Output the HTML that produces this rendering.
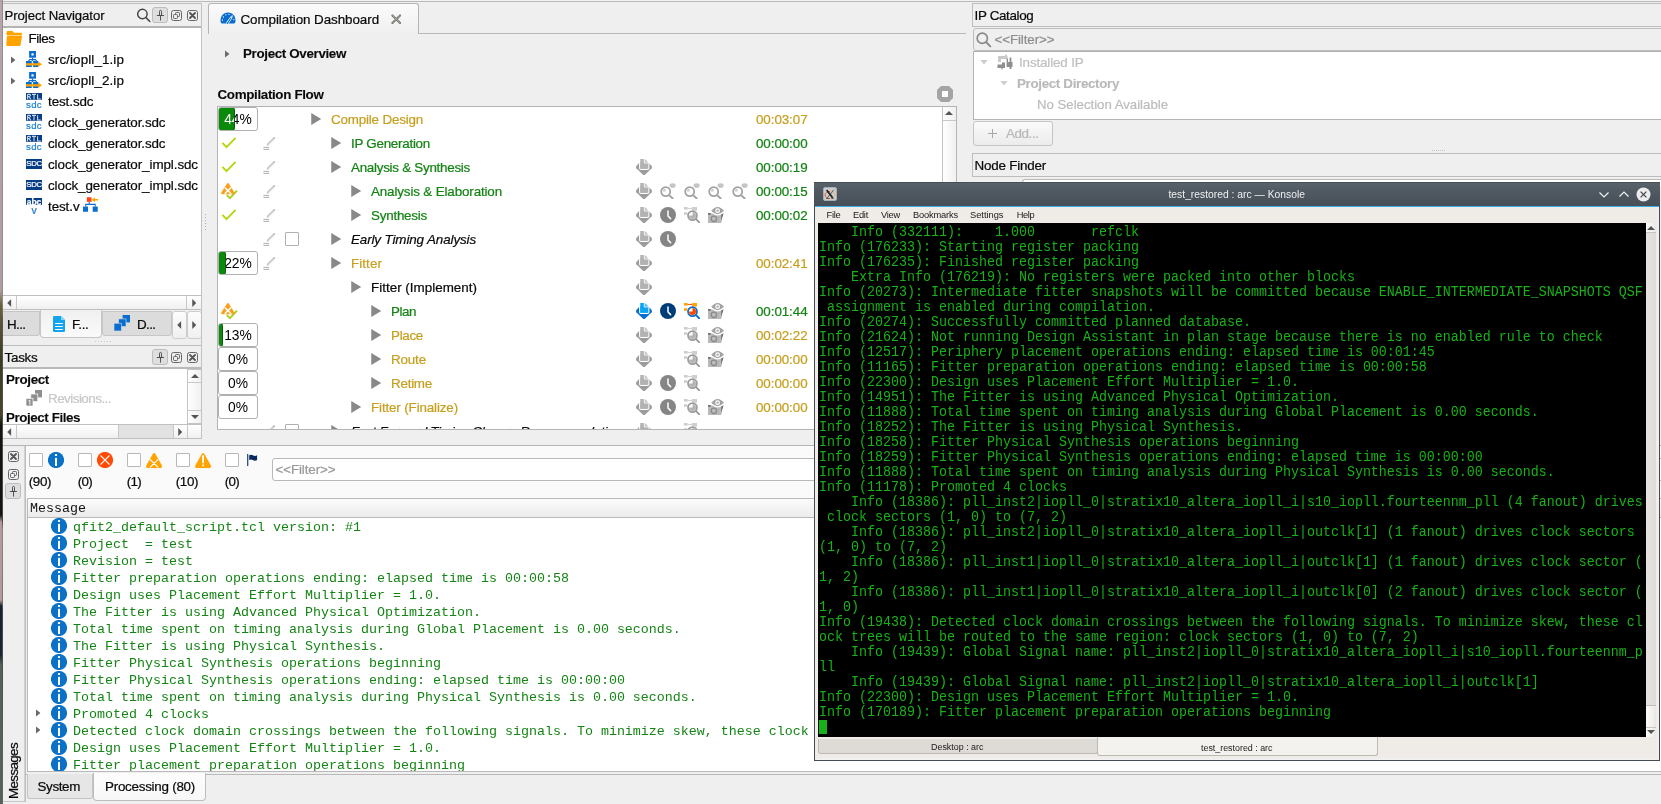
<!DOCTYPE html><html><head><meta charset="utf-8"><title>Quartus</title><style>
html,body{margin:0;padding:0;background:#efefef;}
body{width:1661px;height:804px;overflow:hidden;font-family:"Liberation Sans",sans-serif;font-size:13px;color:#0a0a0a;}
#root{position:relative;width:1661px;height:804px;overflow:hidden;background:#efefef;will-change:transform;}
.a{position:absolute;box-sizing:border-box;}
.t{position:absolute;white-space:pre;line-height:16px;height:16px;font-size:13px;-webkit-text-stroke:0.22px currentColor;}
.ic{position:absolute;overflow:visible;}
.b{font-weight:bold;}
.i{font-style:italic;}
.g{color:#148414;}
.y{color:#c79f1e;}
.gr{color:#b4b4b4;}
.mono{font-family:"Liberation Mono",monospace;font-size:13.33px;}
.hdr{position:absolute;box-sizing:border-box;border:1px solid #bdbdbd;background:#efefef;}
.wbox{position:absolute;box-sizing:border-box;border:1px solid #b4b4b4;background:#fff;}
.pbox{position:absolute;box-sizing:border-box;border:1px solid #b0b0b0;border-radius:3px;background:#fff;width:40px;height:24px;overflow:hidden;}
.pfill{position:absolute;left:-1px;top:-1px;bottom:-1px;background:#0a8a0a;border:1px solid #086008;border-radius:3px;box-sizing:border-box;}
.ptxt{position:absolute;left:0;top:0;width:38px;height:22px;line-height:24px;text-align:center;font-size:13.8px;color:#000;white-space:pre;}
.ptxtw{color:#fff;overflow:hidden;text-align:left;}
.cb{position:absolute;box-sizing:border-box;width:14px;height:14px;border:1px solid #b8b8b8;background:#fff;border-radius:1px;}
.sbtn{position:absolute;box-sizing:border-box;background:linear-gradient(#fdfdfd,#ececec);border:1px solid #c4c4c4;}
.term{position:absolute;left:818px;top:223px;width:828px;height:514px;background:#000;overflow:hidden;}
.tl{position:absolute;left:1px;white-space:pre;font-family:"Liberation Mono",monospace;font-size:13.33px;line-height:15px;height:15px;color:#18b218;transform:scaleY(1.1);transform-origin:0 11px;}
.ml{position:absolute;left:73px;white-space:pre;font-family:"Liberation Mono",monospace;font-size:13.33px;line-height:17px;height:17px;color:#148414;}
.km{position:absolute;top:207px;height:16px;line-height:16px;font-size:11px;color:#1a1a1a;white-space:pre;}

</style></head><body>
<svg width="0" height="0" style="position:absolute">
<defs>
<symbol id="tri" viewBox="0 0 10 12"><path d="M0 0 L10 6 L0 12 Z" fill="#898989"/></symbol>
<symbol id="tris" viewBox="0 0 5 8"><path d="M0 0 L5 4 L0 8 Z" fill="#6a6a6a"/></symbol>
<symbol id="check" viewBox="0 0 14 12"><path d="M0.3 5.8 L4.5 10.1 L13.6 0.8" fill="none" stroke="#b4d60a" stroke-width="1.9" stroke-linejoin="miter"/></symbol>
<symbol id="pencil" viewBox="0 0 13 13"><path d="M4.4 7.8 L11 1.2" stroke="#cdcdcd" stroke-width="2" fill="none"/><path d="M3.6 8.6 L4.8 7.2 L4.9 8.5Z" fill="#9a9a9a"/><rect x="10.5" y="0.2" width="1.5" height="1.5" fill="#b0b0b0"/><path d="M0.4 10.4 H6.3 M0.4 12.4 H6.3" stroke="#8c8c8c" stroke-width="0.7" fill="none"/></symbol>
<symbol id="report" viewBox="0 0 16 16"><path d="M0.3 6.9 L3.6 3.6 H12.4 L15.7 6.9 Q16.2 8.2 15.7 9.3 L9 15.7 Q8 16.3 7 15.7 L0.3 9.3 Q-0.2 8.2 0.3 6.9Z" fill="#9c9c9c"/><path d="M3.7 3 V9.2 Q3.7 10.3 4.8 10.3 H11.7 Q12.8 10.3 12.8 9.2 V3" fill="#b2b2b2" stroke="#fff" stroke-width="1.2"/><path d="M4.3 0 H8.3 L12.2 3.9 V9.7 H4.3 Z" fill="#b2b2b2"/><path d="M8.3 0 V3.9 H12.2" fill="none" stroke="#fff" stroke-width="1"/><path d="M8.9 0.1 L12.1 3.3 H8.9Z" fill="#c4c4c4"/></symbol>
<symbol id="reportb" viewBox="0 0 16 16"><path d="M0.3 6.9 L3.6 3.6 H12.4 L15.7 6.9 Q16.2 8.2 15.7 9.3 L9 15.7 Q8 16.3 7 15.7 L0.3 9.3 Q-0.2 8.2 0.3 6.9Z" fill="#0a6ed1"/><path d="M3.7 3 V9.2 Q3.7 10.3 4.8 10.3 H11.7 Q12.8 10.3 12.8 9.2 V3" fill="#0aa5ee" stroke="#fff" stroke-width="1.2"/><path d="M4.3 0 H8.3 L12.2 3.9 V9.7 H4.3 Z" fill="#0aa5ee"/><path d="M8.3 0 V3.9 H12.2" fill="none" stroke="#fff" stroke-width="1"/><path d="M8.9 0.1 L12.1 3.3 H8.9Z" fill="#3fbcf4"/></symbol>
<symbol id="clock" viewBox="0 0 16 16"><circle cx="8" cy="8" r="8" fill="#858585"/><path d="M8 3.9 V9 L10.6 11.6" stroke="#fff" stroke-width="1.5" fill="none" stroke-linecap="round" stroke-linejoin="round"/></symbol>
<symbol id="clockb" viewBox="0 0 16 16"><circle cx="8" cy="8" r="8" fill="#003c78"/><path d="M8 3.9 V9 L10.6 11.6" stroke="#fff" stroke-width="1.5" fill="none" stroke-linecap="round" stroke-linejoin="round"/></symbol>
<symbol id="mag" viewBox="0 0 16 16"><ellipse cx="12.6" cy="2.6" rx="3.1" ry="2.3" fill="#c6c6c6"/><circle cx="5.7" cy="8.6" r="4.5" fill="#fff" stroke="#a2a2a2" stroke-width="1.7"/><path d="M5.7 8.6 V5.7 A2.9 2.9 0 0 0 2.8 8.6 Z" fill="#cdcdcd"/><path d="M9.2 12.1 L12.6 15.5" stroke="#a2a2a2" stroke-width="1.9" stroke-linecap="round"/></symbol>
<symbol id="magt" viewBox="0 0 16 16"><rect x="0" y="0" width="3.6" height="2.6" fill="#cdcdcd"/><rect x="8.2" y="0" width="4.8" height="3.6" fill="#cdcdcd"/><rect x="0" y="5.2" width="3.2" height="2.6" fill="#cdcdcd"/><path d="M3.6 1.4 H8.2" stroke="#cdcdcd" stroke-width="1"/><circle cx="8.5" cy="8.6" r="4.5" fill="#fff" stroke="#9c9c9c" stroke-width="1.7"/><path d="M8.5 8.6 V5.1 A3.5 3.5 0 1 1 5 8.6 Z" fill="#b4b4b4"/><path d="M12 12.1 L15.3 15.4" stroke="#9c9c9c" stroke-width="1.9" stroke-linecap="round"/></symbol>
<symbol id="magtb" viewBox="0 0 16 16"><rect x="0" y="0" width="3.6" height="2.6" fill="#ffa400"/><rect x="8.2" y="0" width="4.8" height="3.6" fill="#ffa400"/><rect x="0" y="5.2" width="3.2" height="2.6" fill="#ffa400"/><path d="M3.6 1.4 H8.2" stroke="#ff4713" stroke-width="1"/><circle cx="8.5" cy="8.6" r="4.5" fill="#fff" stroke="#0a6ed1" stroke-width="1.7"/><path d="M8.5 8.6 V5.1 A3.5 3.5 0 1 1 5 8.6 Z" fill="#ff4500"/><path d="M12 12.1 L15.3 15.4" stroke="#0a6ed1" stroke-width="1.9" stroke-linecap="round"/></symbol>
<symbol id="cam" viewBox="0 0 16 16"><path d="M0 6.4 H13.4 V16 H0 Z" fill="#b9b9b9"/><path d="M13.2 7.2 L15.6 6.2 L13.2 14.6Z" fill="#6e6e6e"/><rect x="0" y="6" width="2.6" height="1.7" fill="#6a6a6a"/><circle cx="5.9" cy="11.8" r="2.7" fill="#bdbdbd" stroke="#8a8a8a" stroke-width="1.3"/><path d="M2.8 4.6 Q9.6 12.6 16.4 4.6 L15.6 3.6 H3.6Z" fill="#fff"/><path d="M3.2 3.8 Q9.6 -3.8 16 3.8 Q9.6 10.6 3.2 3.8Z" fill="#a2a2a2"/><circle cx="9.6" cy="3.7" r="2.4" fill="#fff"/><circle cx="9.6" cy="3.7" r="1.15" fill="#a2a2a2"/></symbol>
<symbol id="cwchk" viewBox="0 0 17 17"><path d="M5.8 12.1 L8.9 15.1 L16 7.7" fill="none" stroke="#a6cf1a" stroke-width="1.8"/><path d="M5.7 0.9 Q6.9 -0.7 8.1 0.9 L13.4 9.3 Q14.2 11.3 12.1 11.3 H1.7 Q-0.4 11.3 0.4 9.3 Z" fill="#f9a11c"/><path d="M3.7 4.5 L10.1 10.7 M10.1 4.5 L3.7 10.7" stroke="#fff" stroke-width="1.6" fill="none"/></symbol>
<symbol id="stop" viewBox="0 0 16 16"><path d="M4 0 H12 L16 4 V12 L12 16 H4 L0 12 V4 Z" fill="#a4a4a4"/><rect x="5" y="5" width="6" height="6" fill="#fff"/></symbol>
<symbol id="search" viewBox="0 0 14 15"><circle cx="5.6" cy="6.2" r="4.9" fill="none" stroke="#444" stroke-width="1.5"/><path d="M9.2 9.8 L13.6 14.2" stroke="#444" stroke-width="1.7" stroke-linecap="round"/></symbol>
<symbol id="searchg" viewBox="0 0 16 16"><circle cx="6.5" cy="6.5" r="5.3" fill="none" stroke="#8a8a8a" stroke-width="1.7"/><path d="M10.6 10.6 L15 15" stroke="#8a8a8a" stroke-width="1.9" stroke-linecap="round"/></symbol>
<symbol id="pin" viewBox="0 0 8 12"><path d="M4.5 6.5 V11.2 M1.2 6.5 H7.8 M3.5 6.5 V2.4 Q3.5 1.4 4.5 1.4 Q5.5 1.4 5.5 2.4 V6.5" stroke="#444" stroke-width="0.9" fill="none" stroke-linecap="round"/></symbol>
<symbol id="float" viewBox="0 0 11 11"><rect x="0.5" y="0.5" width="10" height="10" rx="2" fill="none" stroke="#666" stroke-width="1"/><rect x="4.5" y="2.5" width="4" height="4" rx="0.8" fill="#efefef" stroke="#666" stroke-width="1"/><rect x="2.5" y="4.5" width="4" height="4" rx="0.8" fill="#efefef" stroke="#666" stroke-width="1"/></symbol>
<symbol id="closeb" viewBox="0 0 11 11"><rect x="0.5" y="0.5" width="10" height="10" rx="2" fill="none" stroke="#666" stroke-width="1"/><path d="M3 3 L8 8 M8 3 L3 8" stroke="#555" stroke-width="1.9" stroke-linecap="round"/></symbol>
<symbol id="tabx" viewBox="0 0 11 11"><path d="M1.5 1.5 L9.5 9.5 M9.5 1.5 L1.5 9.5" stroke="#6f6f68" stroke-width="2.2" stroke-linecap="round"/><path d="M1.5 1.5 L9.5 9.5 M9.5 1.5 L1.5 9.5" stroke="#b5b5ad" stroke-width="0.8" stroke-linecap="round"/></symbol>
<symbol id="folder" viewBox="0 0 16 15"><path d="M0.5 1.2 Q0.5 0 1.7 0 H6.5 L8 1.8 H15 Q16 1.8 15.9 2.8 V4 H0.5 Z" fill="#ffa300"/><path d="M1.6 4.6 H15.4 Q16.2 4.6 16 5.5 L14.6 14 Q14.4 15 13.4 15 H1.2 Q0.2 15 0.3 14 L0.9 5.4 Q1 4.6 1.6 4.6Z" fill="#ffa300"/></symbol>
<symbol id="ipfile" viewBox="0 0 16 16"><rect x="3.1" y="0" width="6.9" height="6.7" fill="#0a6ed1"/><rect x="5.4" y="2.3" width="2.3" height="2.3" rx="0.6" fill="#fff"/><path d="M6.55 6.7 V10 M2.9 10.2 V9.4 L3.6 8.7 H9.5 L10.2 9.4 V10.2" stroke="#0a6ed1" stroke-width="1.2" fill="none"/><rect x="0" y="10" width="5.8" height="6" fill="#0a6ed1"/><rect x="7.1" y="10" width="5.2" height="6" fill="#0a6ed1"/><path d="M0 12.2 H12.3 V10.4 L16 13.3 L12.3 16 V14.6 H0 Z" fill="#ffa400"/></symbol>
<symbol id="rtlsdc" viewBox="0 0 16 16"><rect x="0" y="0" width="16" height="6.8" fill="#063d85"/><path d="M1.5 1.2 V6.2 M1.5 1.4 H3.6 Q4.6 1.6 4.4 2.6 Q4.2 3.6 1.5 3.6 M3 3.6 L4.8 6.2 M6 1.4 H10 M8 1.4 V6.2 M11.6 1.2 V6 H14.8" stroke="#fff" stroke-opacity="0.8" stroke-width="1.1" fill="none"/></symbol>
<symbol id="sdcf" viewBox="0 0 16 10"><rect x="0" y="0" width="16" height="10" fill="#063d85"/></symbol>
<symbol id="abcv" viewBox="0 0 16 16"><rect x="0" y="0" width="16" height="6.8" fill="#063d85"/></symbol>
<symbol id="hier" viewBox="0 0 16 15"><rect x="4" y="0" width="4.8" height="4.8" fill="#ff4713"/><path d="M9.6 2.6 H15.8" stroke="#ffa400" stroke-width="1.3" fill="none"/><path d="M9.2 2.6 L12.4 0 V5.2Z" fill="#ffa400"/><path d="M6.4 4.8 V7.4 M2.8 9.6 V7.4 H12.6 V9.6" stroke="#0a6ed1" stroke-width="1.1" fill="none"/><rect x="0" y="9.6" width="5.2" height="5.4" fill="#0a6ed1"/><rect x="10" y="9.6" width="5.2" height="5.4" fill="#0a6ed1"/></symbol>
<symbol id="gauge" viewBox="0 0 16 12"><path d="M0.5 8.4 C0.5 3.6 4 0.4 8 0.4 C12 0.4 15.5 3.6 15.5 8.4 C15.5 10.6 14.6 11.5 13.2 11.5 H2.8 C1.4 11.5 0.5 10.6 0.5 8.4Z" fill="#0a6ed1"/><path d="M7.3 11.3 L11.2 5.6" stroke="#fff" stroke-width="2.4" stroke-linecap="round"/><path d="M7.2 11.6 L10.9 6" stroke="#0a6ed1" stroke-width="1.1" stroke-linecap="round"/><g fill="#fff"><circle cx="2.4" cy="8" r="0.65"/><circle cx="3.4" cy="5" r="0.65"/><circle cx="5.8" cy="2.8" r="0.65"/><circle cx="9" cy="2.3" r="0.65"/><circle cx="12.2" cy="4" r="0.65"/><circle cx="13.8" cy="7.6" r="0.65"/></g></symbol>
<symbol id="docb" viewBox="0 0 12 16"><path d="M1.2 0 H8 L12 4 V14.8 Q12 16 10.8 16 H1.2 Q0 16 0 14.8 V1.2 Q0 0 1.2 0Z" fill="#12a5ee"/><path d="M8 0 V4 H12" fill="#8ed6f8"/><path d="M2.2 7.5 H9.8 M2.2 10.5 H9.8 M2.2 13.5 H9.8" stroke="#fff" stroke-width="1"/></symbol>
<symbol id="units" viewBox="0 0 16 16"><rect x="8.6" y="0" width="7.4" height="7.4" fill="#0a6ed1"/><rect x="4.6" y="3.9" width="7.4" height="7.6" fill="#0a6ed1" stroke="#dcdcdc" stroke-width="0.6"/><rect x="0" y="8.2" width="7.4" height="7.8" fill="#0a6ed1" stroke="#dcdcdc" stroke-width="0.6"/></symbol>
<symbol id="unitsg" viewBox="0 0 16 16"><rect x="9" y="0" width="7" height="7.4" fill="#8e8e8e"/><rect x="4.8" y="4" width="7" height="7.6" fill="#8e8e8e" stroke="#fff" stroke-width="0.7"/><rect x="0" y="8.3" width="7" height="7.7" fill="#8e8e8e" stroke="#fff" stroke-width="0.7"/><path d="M2.4 11 L3.9 10 V14.8" stroke="#fff" stroke-width="0.9" fill="none"/></symbol>
<symbol id="ipcat" viewBox="0 0 16 16"><path d="M1 2 H8 V0.8 H10 V2 H10.5 V5 H4 V8 H1 Z" fill="#c9c9c9"/><path d="M0.5 10.5 H5 V8.5 H8 V14 H5.6 V15.4 H4.4 V14 H0.5 Z" fill="#8e8e8e"/><path d="M9.6 4.5 H11 V8 H12.6 V3.4 H14.4 V8 H15.5 V13 H14.4 V15 H12.6 V13 H9.6 Z" fill="#8e8e8e"/></symbol>
<symbol id="dtri" viewBox="0 0 8 5"><path d="M0 0 H8 L4 5 Z" fill="#cdcdcd"/></symbol>
<symbol id="info" viewBox="0 0 16 16"><circle cx="8" cy="8" r="8.1" fill="#0a71c6"/><rect x="6.9" y="2" width="2.2" height="2.1" rx="0.7" fill="#fff"/><rect x="7" y="5.7" width="2" height="8.3" rx="0.6" fill="#fff"/></symbol>
<symbol id="err" viewBox="0 0 16 16"><circle cx="8" cy="8" r="8.1" fill="#ff4a04"/><path d="M3.9 3.9 L12.1 12.1 M12.1 3.9 L3.9 12.1" stroke="#fff" stroke-width="1.3" stroke-linecap="round"/></symbol>
<symbol id="cwarn" viewBox="0 0 16 15"><path d="M6.7 0.9 Q8 -0.8 9.3 0.9 L15.6 12 Q16.5 15 13.8 15 H2.2 Q-0.5 15 0.4 12 Z" fill="#ffa300"/><path d="M4.2 6.6 L11.8 13.9 M11.8 6.6 L4.2 13.9" stroke="#fff" stroke-width="1.2" stroke-linecap="round"/></symbol>
<symbol id="warn" viewBox="0 0 16 15"><path d="M6.7 0.9 Q8 -0.8 9.3 0.9 L15.6 12 Q16.5 15 13.8 15 H2.2 Q-0.5 15 0.4 12 Z" fill="#ffa300"/><rect x="7.1" y="2.2" width="1.8" height="8" rx="0.4" fill="#fff"/><rect x="7.1" y="11.4" width="1.8" height="1.8" rx="0.3" fill="#fff"/></symbol>
<symbol id="flag" viewBox="0 0 12 13"><path d="M0.8 0 V13" stroke="#062f6e" stroke-width="1.2"/><path d="M2.4 1.2 Q4.6 0 6.4 1.4 Q8.6 2.6 11 1.4 V6.6 Q8.6 7.8 6.4 6.6 Q4.6 5.4 2.4 6.4 Z" fill="#08285e"/></symbol>
<symbol id="sbup" viewBox="0 0 8 4"><path d="M0 4 L4 0 L8 4Z" fill="#555"/></symbol>
<symbol id="sbdn" viewBox="0 0 8 4"><path d="M0 0 L4 4 L8 0Z" fill="#555"/></symbol>
<symbol id="sblf" viewBox="0 0 4 8"><path d="M4 0 L0 4 L4 8Z" fill="#555"/></symbol>
<symbol id="sbrt" viewBox="0 0 4 8"><path d="M0 0 L4 4 L0 8Z" fill="#555"/></symbol>
</defs></svg>

<div id="root">
<div class="a" style="left:0;top:0;width:1661px;height:1px;background:#f2f2f2"></div><div class="a" style="left:0;top:1px;width:1661px;height:1px;background:#b9b9b9"></div>
<div class="a" style="left:0;top:0;width:2px;height:804px;background:linear-gradient(#b9a4a8 0,#b39c9f 290px,#6a6238 305px,#3c3b22 360px,#4a4526 415px,#14140f 425px,#15150f 515px,#b6999b 522px,#b6999b 600px,#1a2030 606px,#1c2434 655px,#566258 665px,#566258 804px)"></div>
<div class="a" style="left:2px;top:0;width:1px;height:804px;background:linear-gradient(#8e8e8e 0,#8e8e8e 300px,#555 320px,#444 520px,#888 530px,#777 600px,#444 610px,#666 804px)"></div>
<div class="hdr" style="left:3px;top:3px;width:199px;height:25px;border-left:none;border-bottom:2px solid #b4b4b4"></div>
<div class="t " style="left:4.5px;top:8px;font-size:13.2px;letter-spacing:-0.068px;;">Project Navigator</div>
<svg class="ic" style="left:137px;top:7.5px;width:13.5px;height:14.5px" ><use href="#search"/></svg>
<div class="a" style="left:152px;top:7px;width:16px;height:16px;border:1px solid #bdbdbd;border-radius:3px;background:#dedede"></div>
<svg class="ic" style="left:156px;top:9px;width:8px;height:12px" ><use href="#pin"/></svg>
<svg class="ic" style="left:171px;top:9.5px;width:11px;height:11px" ><use href="#float"/></svg>
<svg class="ic" style="left:187px;top:9.5px;width:11px;height:11px" ><use href="#closeb"/></svg>
<div class="a" style="left:3px;top:28px;width:199px;height:268px;background:#fff;border-right:1px solid #bdbdbd"></div>
<svg class="ic" style="left:6px;top:31px;width:16px;height:15px" ><use href="#folder"/></svg>
<div class="t " style="left:28.5px;top:30.5px;font-size:13.4px;letter-spacing:-0.456px;;">Files</div>
<svg class="ic" style="left:11px;top:55.5px;width:4.5px;height:8px" ><use href="#tris"/></svg>
<svg class="ic" style="left:26px;top:51.0px;width:16px;height:16px" ><use href="#ipfile"/></svg>
<div class="t " style="left:48px;top:52.0px;font-size:13.4px;letter-spacing:0.112px;;">src/iopll_1.ip</div>
<svg class="ic" style="left:11px;top:76.5px;width:4.5px;height:8px" ><use href="#tris"/></svg>
<svg class="ic" style="left:26px;top:72.0px;width:16px;height:16px" ><use href="#ipfile"/></svg>
<div class="t " style="left:48px;top:73.0px;font-size:13.4px;letter-spacing:0.112px;;">src/iopll_2.ip</div>
<svg class="ic" style="left:26px;top:93.0px;width:16px;height:16px" ><use href="#rtlsdc"/></svg>
<div class="t" style="left:25px;top:100.0px;width:18px;height:10px;line-height:10px;font-size:9.6px;color:#1f83d1;text-align:center;letter-spacing:0.3px">sdc</div>
<div class="t " style="left:48px;top:94.0px;font-size:13.4px;letter-spacing:-0.082px;;">test.sdc</div>
<svg class="ic" style="left:26px;top:114.0px;width:16px;height:16px" ><use href="#rtlsdc"/></svg>
<div class="t" style="left:25px;top:121.0px;width:18px;height:10px;line-height:10px;font-size:9.6px;color:#1f83d1;text-align:center;letter-spacing:0.3px">sdc</div>
<div class="t " style="left:48px;top:115.0px;font-size:13.4px;letter-spacing:-0.085px;;">clock_generator.sdc</div>
<svg class="ic" style="left:26px;top:135.0px;width:16px;height:16px" ><use href="#rtlsdc"/></svg>
<div class="t" style="left:25px;top:142.0px;width:18px;height:10px;line-height:10px;font-size:9.6px;color:#1f83d1;text-align:center;letter-spacing:0.3px">sdc</div>
<div class="t " style="left:48px;top:136.0px;font-size:13.4px;letter-spacing:-0.085px;;">clock_generator.sdc</div>
<svg class="ic" style="left:26px;top:159.0px;width:16px;height:10px" ><use href="#sdcf"/></svg>
<div class="t" style="left:26px;top:159.0px;width:16px;height:10px;line-height:10.5px;font-size:7.8px;color:#fff;text-align:center;letter-spacing:-0.35px">SDC</div>
<div class="t " style="left:48px;top:157.0px;font-size:13.4px;letter-spacing:-0.077px;;">clock_generator_impl.sdc</div>
<svg class="ic" style="left:26px;top:180.0px;width:16px;height:10px" ><use href="#sdcf"/></svg>
<div class="t" style="left:26px;top:180.0px;width:16px;height:10px;line-height:10.5px;font-size:7.8px;color:#fff;text-align:center;letter-spacing:-0.35px">SDC</div>
<div class="t " style="left:48px;top:178.0px;font-size:13.4px;letter-spacing:-0.077px;;">clock_generator_impl.sdc</div>
<svg class="ic" style="left:26px;top:198.0px;width:16px;height:16px" ><use href="#abcv"/></svg>
<div class="t" style="left:26px;top:197.5px;width:16px;height:8px;line-height:8px;font-size:8.5px;color:#fff;text-align:center;font-weight:bold">abc</div>
<div class="t" style="left:26px;top:205.0px;width:16px;height:10px;line-height:10px;font-size:10.5px;color:#1f78d1;text-align:center">v</div>
<div class="t " style="left:48px;top:199.0px;font-size:13.4px;letter-spacing:-0.083px;;">test.v</div>
<svg class="ic" style="left:83px;top:197px;width:15.5px;height:15px" ><use href="#hier"/></svg>
<div class="a" style="left:3px;top:295px;width:199px;height:15px;border:1px solid #c0c0c0;border-left:none;background:linear-gradient(#ffffff,#f0f0f0)"></div>
<div class="a" style="left:16px;top:296px;width:1px;height:13px;background:#c8c8c8"></div>
<div class="a" style="left:186px;top:296px;width:1px;height:13px;background:#c8c8c8"></div>
<svg class="ic" style="left:7px;top:298.5px;width:4.5px;height:8px" ><use href="#sblf"/></svg>
<svg class="ic" style="left:192px;top:298.5px;width:4.5px;height:8px" ><use href="#sbrt"/></svg>
<div class="a" style="left:3px;top:311px;width:37px;height:25px;background:#dcdcdc;border:1px solid #c6c6c6;border-left:none;border-radius:0 0 3px 0"></div>
<div class="a" style="left:102px;top:311px;width:70px;height:25px;background:#dcdcdc;border:1px solid #c6c6c6;border-radius:0 0 3px 3px"></div>
<div class="a" style="left:40px;top:310px;width:62px;height:28px;background:linear-gradient(#f0f0f0,#fafafa);border:1px solid #c6c6c6;border-top:none;border-radius:0 0 4px 4px"></div>
<div class="a" style="left:172px;top:311px;width:15px;height:28px;background:linear-gradient(#fdfdfd,#f0f0f0);border:1px solid #cdcdcd;border-radius:3px"></div>
<div class="a" style="left:187px;top:311px;width:15px;height:28px;background:linear-gradient(#fdfdfd,#f0f0f0);border:1px solid #cdcdcd;border-radius:3px"></div>
<svg class="ic" style="left:176.5px;top:321px;width:4.5px;height:8px" ><use href="#sblf"/></svg>
<svg class="ic" style="left:191.5px;top:321px;width:4.5px;height:8px" ><use href="#sbrt"/></svg>
<div class="t " style="left:7px;top:316.5px;font-size:13.4px;letter-spacing:-0.586px;;">H...</div>
<svg class="ic" style="left:53px;top:316px;width:12px;height:16px" ><use href="#docb"/></svg>
<div class="t " style="left:72px;top:316.5px;font-size:13.4px;letter-spacing:-0.340px;;">F...</div>
<svg class="ic" style="left:114px;top:315px;width:16px;height:16px" ><use href="#units"/></svg>
<div class="t " style="left:137px;top:316.5px;font-size:13.4px;letter-spacing:-0.586px;;">D...</div>
<div class="a" style="left:95px;top:341px;width:16px;height:1px;background:repeating-linear-gradient(90deg,#c4c4c4 0 1px,transparent 1px 3px)"></div>
<div class="hdr" style="left:3px;top:345px;width:199px;height:24px;border-left:none;border-bottom:2px solid #b9b9b9"></div>
<div class="t " style="left:4.5px;top:349.5px;font-size:13.4px;letter-spacing:-0.247px;;">Tasks</div>
<div class="a" style="left:152px;top:349px;width:16px;height:16px;border:1px solid #bdbdbd;border-radius:3px;background:#dedede"></div>
<svg class="ic" style="left:156px;top:351px;width:8px;height:12px" ><use href="#pin"/></svg>
<svg class="ic" style="left:171px;top:351.5px;width:11px;height:11px" ><use href="#float"/></svg>
<svg class="ic" style="left:187px;top:351.5px;width:11px;height:11px" ><use href="#closeb"/></svg>
<div class="a" style="left:3px;top:369px;width:184px;height:55px;background:#fff"></div>
<div class="a" style="left:3px;top:369px;width:184px;height:55px;overflow:hidden">
<div class="t " style="left:3px;top:2.5px;font-size:13.4px;letter-spacing:-0.344px;;font-weight:bold;-webkit-text-stroke:0.1px currentColor;">Project</div>
<div class="t " style="left:45px;top:21.5px;font-size:13.4px;letter-spacing:-0.518px;color:#c8c8c8;">Revisions...</div>
<div class="t " style="left:3px;top:40.5px;font-size:13.4px;letter-spacing:-0.434px;;font-weight:bold;-webkit-text-stroke:0.1px currentColor;">Project Files</div>
</div>
<svg class="ic" style="left:26px;top:390px;width:16px;height:16px" ><use href="#unitsg"/></svg>
<div class="a" style="left:187px;top:369px;width:15px;height:55px;border:1px solid #c4c4c4;background:linear-gradient(90deg,#ffffff,#f0f0f0)"></div>
<div class="a" style="left:188px;top:382px;width:13px;height:1px;background:#c8c8c8"></div>
<div class="a" style="left:188px;top:410px;width:13px;height:1px;background:#c8c8c8"></div>
<svg class="ic" style="left:190.5px;top:374px;width:8px;height:4px" ><use href="#sbup"/></svg>
<svg class="ic" style="left:190.5px;top:415px;width:8px;height:4px" ><use href="#sbdn"/></svg>
<div class="a" style="left:3px;top:424px;width:199px;height:15px;border:1px solid #c0c0c0;border-left:none;background:linear-gradient(#ffffff,#f0f0f0)"></div>
<div class="a" style="left:16px;top:425px;width:1px;height:13px;background:#c8c8c8"></div>
<div class="a" style="left:118px;top:425px;width:56px;height:13px;background:#e2e2e2;border-left:1px solid #c8c8c8;border-right:1px solid #c8c8c8"></div>
<div class="a" style="left:187px;top:425px;width:1px;height:13px;background:#c8c8c8"></div>
<svg class="ic" style="left:7px;top:427.5px;width:4.5px;height:8px" ><use href="#sblf"/></svg>
<svg class="ic" style="left:178px;top:427.5px;width:4.5px;height:8px" ><use href="#sbrt"/></svg>
<div class="a" style="left:201px;top:3px;width:1px;height:436px;background:#c2c2c2"></div>
<div class="a" style="left:205px;top:214px;width:1px;height:16px;background:repeating-linear-gradient(180deg,#adadad 0 1px,transparent 1px 3px)"></div>
<div class="a" style="left:208px;top:33px;width:758px;height:1px;background:#b9b9b9"></div>
<div class="a" style="left:208px;top:3px;width:211px;height:31px;background:linear-gradient(#fbfbfb,#efefef);border:1px solid #b4b4b4;border-bottom:none;border-radius:3px 3px 0 0"></div>
<svg class="ic" style="left:220px;top:11.5px;width:16px;height:12px" ><use href="#gauge"/></svg>
<div class="t " style="left:240.5px;top:11.5px;font-size:13.4px;letter-spacing:-0.068px;;">Compilation Dashboard</div>
<svg class="ic" style="left:390.5px;top:13.5px;width:10.5px;height:10.5px" ><use href="#tabx"/></svg>
<svg class="ic" style="left:225px;top:50px;width:4.5px;height:8px" ><use href="#tris"/></svg>
<div class="t " style="left:243px;top:46px;font-size:13.4px;letter-spacing:-0.354px;;font-weight:bold;-webkit-text-stroke:0.1px currentColor;">Project Overview</div>
<div class="t " style="left:217.5px;top:86.5px;font-size:13.4px;letter-spacing:-0.349px;;font-weight:bold;-webkit-text-stroke:0.1px currentColor;">Compilation Flow</div>
<svg class="ic" style="left:937px;top:86px;width:16px;height:16px" ><use href="#stop"/></svg>
<div class="wbox" style="left:217px;top:106px;width:740px;height:324px;overflow:hidden" id="flow">
<div class="pbox" style="left:0px;top:0px">
<div class="ptxt">44%</div>
<div class="pfill" style="width:17px"></div>
<div class="ptxt ptxtw" style="width:15px"><div style="width:38px;text-align:center">44%</div></div>
</div>
<svg class="ic" style="left:93px;top:6px;width:10.5px;height:12px" ><use href="#tri"/></svg>
<div class="t y" style="left:113px;top:4.5px;font-size:13.4px;letter-spacing:-0.181px;;">Compile Design</div>
<div class="t y" style="left:538px;top:4.5px;font-size:13.4px;letter-spacing:-0.078px;;">00:03:07</div>
<svg class="ic" style="left:4px;top:30px;width:14px;height:12px" ><use href="#check"/></svg>
<svg class="ic" style="left:44.5px;top:30px;width:13px;height:13px" ><use href="#pencil"/></svg>
<svg class="ic" style="left:113px;top:30px;width:10.5px;height:12px" ><use href="#tri"/></svg>
<div class="t g" style="left:133px;top:28.5px;font-size:13.4px;letter-spacing:-0.261px;;">IP Generation</div>
<div class="t g" style="left:538px;top:28.5px;font-size:13.4px;letter-spacing:-0.078px;;">00:00:00</div>
<svg class="ic" style="left:4px;top:54px;width:14px;height:12px" ><use href="#check"/></svg>
<svg class="ic" style="left:44.5px;top:54px;width:13px;height:13px" ><use href="#pencil"/></svg>
<svg class="ic" style="left:113px;top:54px;width:10.5px;height:12px" ><use href="#tri"/></svg>
<div class="t g" style="left:133px;top:52.5px;font-size:13.4px;letter-spacing:-0.265px;;">Analysis &amp; Synthesis</div>
<svg class="ic" style="left:418px;top:52px;width:16px;height:16px" ><use href="#report"/></svg>
<div class="t g" style="left:538px;top:52.5px;font-size:13.4px;letter-spacing:-0.078px;;">00:00:19</div>
<svg class="ic" style="left:2.6999999999999886px;top:75.6px;width:17px;height:17px" ><use href="#cwchk"/></svg>
<svg class="ic" style="left:44.5px;top:78px;width:13px;height:13px" ><use href="#pencil"/></svg>
<svg class="ic" style="left:133px;top:78px;width:10.5px;height:12px" ><use href="#tri"/></svg>
<div class="t g" style="left:153px;top:76.5px;font-size:13.4px;letter-spacing:-0.136px;;">Analysis &amp; Elaboration</div>
<svg class="ic" style="left:418px;top:76px;width:16px;height:16px" ><use href="#report"/></svg>
<svg class="ic" style="left:442px;top:76px;width:16px;height:16px" ><use href="#mag"/></svg>
<svg class="ic" style="left:466px;top:76px;width:16px;height:16px" ><use href="#mag"/></svg>
<svg class="ic" style="left:490px;top:76px;width:16px;height:16px" ><use href="#mag"/></svg>
<svg class="ic" style="left:514px;top:76px;width:16px;height:16px" ><use href="#mag"/></svg>
<div class="t g" style="left:538px;top:76.5px;font-size:13.4px;letter-spacing:-0.078px;;">00:00:15</div>
<svg class="ic" style="left:4px;top:102px;width:14px;height:12px" ><use href="#check"/></svg>
<svg class="ic" style="left:44.5px;top:102px;width:13px;height:13px" ><use href="#pencil"/></svg>
<svg class="ic" style="left:133px;top:102px;width:10.5px;height:12px" ><use href="#tri"/></svg>
<div class="t g" style="left:153px;top:100.5px;font-size:13.4px;letter-spacing:-0.229px;;">Synthesis</div>
<svg class="ic" style="left:418px;top:100px;width:16px;height:16px" ><use href="#report"/></svg>
<svg class="ic" style="left:442px;top:100px;width:16px;height:16px" ><use href="#clock"/></svg>
<svg class="ic" style="left:466px;top:100px;width:16px;height:16px" ><use href="#magt"/></svg>
<svg class="ic" style="left:490px;top:100px;width:16px;height:16px" ><use href="#cam"/></svg>
<div class="t g" style="left:538px;top:100.5px;font-size:13.4px;letter-spacing:-0.078px;;">00:00:02</div>
<svg class="ic" style="left:44.5px;top:126px;width:13px;height:13px" ><use href="#pencil"/></svg>
<div class="cb" style="left:67px;top:125px;border-color:#b0b0b0"></div>
<svg class="ic" style="left:113px;top:126px;width:10.5px;height:12px" ><use href="#tri"/></svg>
<div class="t " style="left:133px;top:124.5px;font-size:13.4px;letter-spacing:-0.113px;;font-style:italic;">Early Timing Analysis</div>
<svg class="ic" style="left:418px;top:124px;width:16px;height:16px" ><use href="#report"/></svg>
<svg class="ic" style="left:442px;top:124px;width:16px;height:16px" ><use href="#clock"/></svg>
<div class="pbox" style="left:0px;top:144px">
<div class="ptxt">22%</div>
<div class="pfill" style="width:8px"></div>
<div class="ptxt ptxtw" style="width:6px"><div style="width:38px;text-align:center">22%</div></div>
</div>
<svg class="ic" style="left:44.5px;top:150px;width:13px;height:13px" ><use href="#pencil"/></svg>
<svg class="ic" style="left:113px;top:150px;width:10.5px;height:12px" ><use href="#tri"/></svg>
<div class="t y" style="left:133px;top:148.5px;font-size:13.4px;letter-spacing:0.081px;;">Fitter</div>
<svg class="ic" style="left:418px;top:148px;width:16px;height:16px" ><use href="#report"/></svg>
<div class="t y" style="left:538px;top:148.5px;font-size:13.4px;letter-spacing:-0.078px;;">00:02:41</div>
<svg class="ic" style="left:133px;top:174px;width:10.5px;height:12px" ><use href="#tri"/></svg>
<div class="t " style="left:153px;top:172.5px;font-size:13.4px;letter-spacing:0.019px;;">Fitter (Implement)</div>
<svg class="ic" style="left:418px;top:172px;width:16px;height:16px" ><use href="#report"/></svg>
<svg class="ic" style="left:2.6999999999999886px;top:195.6px;width:17px;height:17px" ><use href="#cwchk"/></svg>
<svg class="ic" style="left:153px;top:198px;width:10.5px;height:12px" ><use href="#tri"/></svg>
<div class="t g" style="left:173px;top:196.5px;font-size:13.4px;letter-spacing:-0.453px;;">Plan</div>
<svg class="ic" style="left:418px;top:196px;width:16px;height:16px" ><use href="#reportb"/></svg>
<svg class="ic" style="left:442px;top:196px;width:16px;height:16px" ><use href="#clockb"/></svg>
<svg class="ic" style="left:466px;top:196px;width:16px;height:16px" ><use href="#magtb"/></svg>
<svg class="ic" style="left:490px;top:196px;width:16px;height:16px" ><use href="#cam"/></svg>
<div class="t g" style="left:538px;top:196.5px;font-size:13.4px;letter-spacing:-0.078px;;">00:01:44</div>
<div class="pbox" style="left:0px;top:216px">
<div class="ptxt">13%</div>
<div class="pfill" style="width:5px"></div>
<div class="ptxt ptxtw" style="width:3px"><div style="width:38px;text-align:center">13%</div></div>
</div>
<svg class="ic" style="left:153px;top:222px;width:10.5px;height:12px" ><use href="#tri"/></svg>
<div class="t y" style="left:173px;top:220.5px;font-size:13.4px;letter-spacing:-0.300px;;">Place</div>
<svg class="ic" style="left:418px;top:220px;width:16px;height:16px" ><use href="#report"/></svg>
<svg class="ic" style="left:466px;top:220px;width:16px;height:16px" ><use href="#magt"/></svg>
<svg class="ic" style="left:490px;top:220px;width:16px;height:16px" ><use href="#cam"/></svg>
<div class="t y" style="left:538px;top:220.5px;font-size:13.4px;letter-spacing:-0.078px;;">00:02:22</div>
<div class="pbox" style="left:0px;top:240px">
<div class="ptxt">0%</div>
</div>
<svg class="ic" style="left:153px;top:246px;width:10.5px;height:12px" ><use href="#tri"/></svg>
<div class="t y" style="left:173px;top:244.5px;font-size:13.4px;letter-spacing:-0.147px;;">Route</div>
<svg class="ic" style="left:418px;top:244px;width:16px;height:16px" ><use href="#report"/></svg>
<svg class="ic" style="left:466px;top:244px;width:16px;height:16px" ><use href="#magt"/></svg>
<svg class="ic" style="left:490px;top:244px;width:16px;height:16px" ><use href="#cam"/></svg>
<div class="t y" style="left:538px;top:244.5px;font-size:13.4px;letter-spacing:-0.078px;;">00:00:00</div>
<div class="pbox" style="left:0px;top:264px">
<div class="ptxt">0%</div>
</div>
<svg class="ic" style="left:153px;top:270px;width:10.5px;height:12px" ><use href="#tri"/></svg>
<div class="t y" style="left:173px;top:268.5px;font-size:13.4px;letter-spacing:-0.237px;;">Retime</div>
<svg class="ic" style="left:418px;top:268px;width:16px;height:16px" ><use href="#report"/></svg>
<svg class="ic" style="left:442px;top:268px;width:16px;height:16px" ><use href="#clock"/></svg>
<svg class="ic" style="left:466px;top:268px;width:16px;height:16px" ><use href="#magt"/></svg>
<div class="t y" style="left:538px;top:268.5px;font-size:13.4px;letter-spacing:-0.078px;;">00:00:00</div>
<div class="pbox" style="left:0px;top:288px">
<div class="ptxt">0%</div>
</div>
<svg class="ic" style="left:133px;top:294px;width:10.5px;height:12px" ><use href="#tri"/></svg>
<div class="t y" style="left:153px;top:292.5px;font-size:13.4px;letter-spacing:-0.135px;;">Fitter (Finalize)</div>
<svg class="ic" style="left:418px;top:292px;width:16px;height:16px" ><use href="#report"/></svg>
<svg class="ic" style="left:442px;top:292px;width:16px;height:16px" ><use href="#clock"/></svg>
<svg class="ic" style="left:466px;top:292px;width:16px;height:16px" ><use href="#magt"/></svg>
<svg class="ic" style="left:490px;top:292px;width:16px;height:16px" ><use href="#cam"/></svg>
<div class="t y" style="left:538px;top:292.5px;font-size:13.4px;letter-spacing:-0.078px;;">00:00:00</div>
<svg class="ic" style="left:44.5px;top:318px;width:13px;height:13px" ><use href="#pencil"/></svg>
<div class="cb" style="left:67px;top:317px;border-color:#b0b0b0"></div>
<svg class="ic" style="left:113px;top:318px;width:10.5px;height:12px" ><use href="#tri"/></svg>
<div class="t " style="left:133px;top:316.5px;font-size:13.4px;letter-spacing:-0.253px;;font-style:italic;">Fast Forward Timing Closure Recommendations</div>
<svg class="ic" style="left:418px;top:316px;width:16px;height:16px" ><use href="#report"/></svg>
<svg class="ic" style="left:466px;top:316px;width:16px;height:16px" ><use href="#magt"/></svg>
<div class="a" style="left:724px;top:0;width:14px;height:325px;border-left:1px solid #c4c4c4;background:linear-gradient(90deg,#ffffff,#f0f0f0)"></div>
<div class="a" style="left:725px;top:13px;width:13px;height:1px;background:#c8c8c8"></div>
<svg class="ic" style="left:727px;top:4px;width:8px;height:4px" ><use href="#sbup"/></svg>
</div>
<div class="a" style="left:965px;top:33px;width:1px;height:1px;background:#b9b9b9"></div>
<div class="hdr" style="left:972px;top:3px;width:700px;height:24px"></div>
<div class="t " style="left:974.5px;top:8px;font-size:13.4px;letter-spacing:-0.330px;;">IP Catalog</div>
<div class="a" style="left:973px;top:28px;width:700px;height:23px;border:1px solid #bdbdbd;border-radius:3px;background:#efefef"></div>
<svg class="ic" style="left:976px;top:31.5px;width:15.5px;height:15.5px" ><use href="#searchg"/></svg>
<div class="t " style="left:994.5px;top:32px;font-size:13.4px;letter-spacing:-0.105px;color:#8e8e8e;">&lt;&lt;Filter&gt;&gt;</div>
<div class="wbox" style="left:973px;top:51px;width:700px;height:69px;border-top:1px solid #b0b0b0"></div>
<svg class="ic" style="left:980px;top:60px;width:8px;height:4.5px" ><use href="#dtri"/></svg>
<svg class="ic" style="left:997px;top:54px;width:16px;height:16px" ><use href="#ipcat"/></svg>
<div class="t " style="left:1019px;top:55px;font-size:13.4px;letter-spacing:-0.146px;color:#c0c0c0;">Installed IP</div>
<svg class="ic" style="left:1000px;top:81px;width:8px;height:4.5px" ><use href="#dtri"/></svg>
<div class="t " style="left:1017px;top:76px;font-size:13.4px;letter-spacing:-0.348px;color:#b9b9b9;font-weight:bold;-webkit-text-stroke:0.1px currentColor;">Project Directory</div>
<div class="t " style="left:1037px;top:97px;font-size:13.2px;letter-spacing:0.000px;color:#bcbcbc;">No Selection Available</div>
<div class="a" style="left:973px;top:121px;width:80px;height:25px;border:1px solid #c4c4c4;border-radius:3px;background:linear-gradient(#fafafa,#ececec)"></div>
<div class="a" style="left:988px;top:133px;width:9px;height:1px;background:#a8a8a8"></div>
<div class="a" style="left:992px;top:129px;width:1px;height:9px;background:#a8a8a8"></div>
<div class="t " style="left:1006px;top:125.5px;font-size:13.4px;letter-spacing:-0.417px;color:#b9b9b9;">Add...</div>
<div class="a" style="left:1432px;top:150px;width:14px;height:1px;background:repeating-linear-gradient(90deg,#c4c4c4 0 1px,transparent 1px 2px)"></div>
<div class="hdr" style="left:972px;top:153px;width:700px;height:24px"></div>
<div class="t " style="left:974.5px;top:157.5px;font-size:13.4px;letter-spacing:-0.200px;;">Node Finder</div>
<div class="a" style="left:1022px;top:179px;width:650px;height:8px;background:#fff;border-top:1px solid #b9b9b9;border-left:1px solid #b9b9b9;border-radius:3px 0 0 0"></div>
<div class="a" style="left:3px;top:445px;width:1660px;height:1px;background:#b4b4b4"></div>
<div class="a" style="left:3px;top:446px;width:22px;height:358px;background:#efefef"></div>
<div class="a" style="left:24px;top:446px;width:2px;height:356px;background:linear-gradient(90deg,#dcdcdc,#b4b4b4)"></div>
<svg class="ic" style="left:8px;top:451px;width:11px;height:11px" ><use href="#closeb"/></svg>
<svg class="ic" style="left:8px;top:469px;width:11px;height:11px" ><use href="#float"/></svg>
<div class="a" style="left:5px;top:483px;width:16px;height:16px;border:1px solid #bdbdbd;border-radius:3px;background:#dedede"></div>
<svg class="ic" style="left:9px;top:485px;width:8px;height:12px" ><use href="#pin"/></svg>
<div class="t" style="left:-14.5px;top:763px;width:56px;height:16px;font-size:13.4px;letter-spacing:-0.629px;transform:rotate(-90deg);transform-origin:center;text-align:left">Messages</div>
<div class="a" style="left:26px;top:446px;width:1640px;height:53px;background:#fafafa"></div>
<div class="cb" style="left:29px;top:453px"></div>
<svg class="ic" style="left:48px;top:452px;width:16px;height:16px" ><use href="#info"/></svg>
<div class="t " style="left:28.7px;top:474px;font-size:13.4px;letter-spacing:-0.332px;;">(90)</div>
<div class="cb" style="left:78px;top:453px"></div>
<svg class="ic" style="left:97px;top:452px;width:16px;height:16px" ><use href="#err"/></svg>
<div class="t " style="left:77.7px;top:474px;font-size:13.4px;letter-spacing:-0.625px;;">(0)</div>
<div class="cb" style="left:127px;top:453px"></div>
<svg class="ic" style="left:146px;top:452.8px;width:16.2px;height:15.2px" ><use href="#cwarn"/></svg>
<div class="t " style="left:126.7px;top:474px;font-size:13.4px;letter-spacing:-0.625px;;">(1)</div>
<div class="cb" style="left:176px;top:453px"></div>
<svg class="ic" style="left:195px;top:452.8px;width:16.2px;height:15.2px" ><use href="#warn"/></svg>
<div class="t " style="left:175.7px;top:474px;font-size:13.4px;letter-spacing:-0.332px;;">(10)</div>
<div class="cb" style="left:225px;top:453px"></div>
<svg class="ic" style="left:247.3px;top:453.8px;width:11px;height:12px" ><use href="#flag"/></svg>
<div class="t " style="left:224.7px;top:474px;font-size:13.4px;letter-spacing:-0.625px;;">(0)</div>
<div class="a" style="left:272px;top:458px;width:1400px;height:23px;border:1px solid #b9b9b9;border-radius:3px;background:#fff"></div>
<div class="t " style="left:275.5px;top:462px;font-size:13.4px;letter-spacing:-0.105px;color:#999;">&lt;&lt;Filter&gt;&gt;</div>
<div class="a" style="left:27px;top:498px;width:1640px;height:20px;border:1px solid #b9b9b9;background:linear-gradient(#fcfcfc,#ebebeb)"></div>
<div class="ml" style="left:30px;top:500px;color:#111">Message</div>
<div class="a" style="left:27px;top:518px;width:1640px;height:254px;border:1px solid #b9b9b9;border-top:none;background:#fff"></div>
<div class="a" style="left:28px;top:518px;width:1630px;height:253px;overflow:hidden">
<svg class="ic" style="left:22.5px;top:0px;width:16px;height:16px" ><use href="#info"/></svg>
<div class="ml" style="left:45px;top:0.5px">qfit2_default_script.tcl version: #1</div>
<svg class="ic" style="left:22.5px;top:17px;width:16px;height:16px" ><use href="#info"/></svg>
<div class="ml" style="left:45px;top:17.5px">Project  = test</div>
<svg class="ic" style="left:22.5px;top:34px;width:16px;height:16px" ><use href="#info"/></svg>
<div class="ml" style="left:45px;top:34.5px">Revision = test</div>
<svg class="ic" style="left:22.5px;top:51px;width:16px;height:16px" ><use href="#info"/></svg>
<div class="ml" style="left:45px;top:51.5px">Fitter preparation operations ending: elapsed time is 00:00:58</div>
<svg class="ic" style="left:22.5px;top:68px;width:16px;height:16px" ><use href="#info"/></svg>
<div class="ml" style="left:45px;top:68.5px">Design uses Placement Effort Multiplier = 1.0.</div>
<svg class="ic" style="left:22.5px;top:85px;width:16px;height:16px" ><use href="#info"/></svg>
<div class="ml" style="left:45px;top:85.5px">The Fitter is using Advanced Physical Optimization.</div>
<svg class="ic" style="left:22.5px;top:102px;width:16px;height:16px" ><use href="#info"/></svg>
<div class="ml" style="left:45px;top:102.5px">Total time spent on timing analysis during Global Placement is 0.00 seconds.</div>
<svg class="ic" style="left:22.5px;top:119px;width:16px;height:16px" ><use href="#info"/></svg>
<div class="ml" style="left:45px;top:119.5px">The Fitter is using Physical Synthesis.</div>
<svg class="ic" style="left:22.5px;top:136px;width:16px;height:16px" ><use href="#info"/></svg>
<div class="ml" style="left:45px;top:136.5px">Fitter Physical Synthesis operations beginning</div>
<svg class="ic" style="left:22.5px;top:153px;width:16px;height:16px" ><use href="#info"/></svg>
<div class="ml" style="left:45px;top:153.5px">Fitter Physical Synthesis operations ending: elapsed time is 00:00:00</div>
<svg class="ic" style="left:22.5px;top:170px;width:16px;height:16px" ><use href="#info"/></svg>
<div class="ml" style="left:45px;top:170.5px">Total time spent on timing analysis during Physical Synthesis is 0.00 seconds.</div>
<svg class="ic" style="left:22.5px;top:187px;width:16px;height:16px" ><use href="#info"/></svg>
<svg class="ic" style="left:8px;top:191px;width:4.5px;height:8px" ><use href="#tris"/></svg>
<div class="ml" style="left:45px;top:187.5px">Promoted 4 clocks</div>
<svg class="ic" style="left:22.5px;top:204px;width:16px;height:16px" ><use href="#info"/></svg>
<svg class="ic" style="left:8px;top:208px;width:4.5px;height:8px" ><use href="#tris"/></svg>
<div class="ml" style="left:45px;top:204.5px">Detected clock domain crossings between the following signals. To minimize skew, these clock trees will be routed to the same region</div>
<svg class="ic" style="left:22.5px;top:221px;width:16px;height:16px" ><use href="#info"/></svg>
<div class="ml" style="left:45px;top:221.5px">Design uses Placement Effort Multiplier = 1.0.</div>
<svg class="ic" style="left:22.5px;top:238px;width:16px;height:16px" ><use href="#info"/></svg>
<div class="ml" style="left:45px;top:238.5px">Fitter placement preparation operations beginning</div>
</div>
<div class="a" style="left:26px;top:774px;width:1640px;height:1px;background:#b9b9b9"></div>
<div class="a" style="left:27px;top:774px;width:66px;height:25px;background:#e6e6e6;border:1px solid #c4c4c4;border-top:none;border-radius:0 0 3px 3px"></div>
<div class="a" style="left:93px;top:773px;width:113px;height:28px;background:linear-gradient(#fdfdfd,#f7f7f7);border:1px solid #bdbdbd;border-top:none;border-radius:0 0 4px 4px"></div>
<div class="t " style="left:37.5px;top:778.5px;font-size:13.4px;letter-spacing:-0.359px;;">System</div>
<div class="t " style="left:105px;top:779px;font-size:13.4px;letter-spacing:-0.252px;;">Processing (80)</div>
<div class="a" style="left:3px;top:801px;width:22px;height:1px;background:#c4c4c4"></div>
<div class="a" style="left:814px;top:182px;width:846px;height:579px;background:#efebe7;border:1px solid #434b53;border-top:none"></div>
<div class="a" style="left:814px;top:182px;width:846px;height:24px;background:linear-gradient(#3f464d 0,#57616a 1.5px,#4f5861 45%,#474e56)"></div>
<div class="a" style="left:815px;top:206px;width:844px;height:1px;background:#3daee9"></div>
<div class="a" style="left:823px;top:187px;width:14px;height:14px;background:#c9cdd0;border-radius:2px;border:1px solid #a9aeb3"></div>
<svg class="ic" style="left:823px;top:187px;width:14px;height:14px" viewBox="0 0 14 14"><path d="M7 4.4 A5 3.6 0 0 0 7 11.6" fill="none" stroke="#e2572b" stroke-width="1"/><path d="M7 4.4 A5 3.6 0 0 1 7 11.6" fill="none" stroke="#ecb568" stroke-width="0.8"/><path d="M3.6 3 L9.6 10.8" stroke="#1e1e1e" stroke-width="1.7" fill="none"/><path d="M10.8 2.8 L4.4 10.8" stroke="#2a2a2a" stroke-width="0.7" fill="none"/><path d="M3.2 11.4 H5.6 M8.4 11.4 H10.8" stroke="#333" stroke-width="0.8"/></svg>
<div class="t " style="left:1168.5px;top:186.5px;font-size:10.3px;letter-spacing:0.010px;color:#eef0f1;-webkit-text-stroke:0;">test_restored : arc — Konsole</div>
<svg class="ic" style="left:1598px;top:188px;width:52px;height:14px" viewBox="0 0 52 14"><path d="M1.5 4.5 L6 9 L10.5 4.5" fill="none" stroke="#f0f2f3" stroke-width="1.2"/><path d="M21.5 8.5 L26 4 L30.5 8.5" fill="none" stroke="#f0f2f3" stroke-width="1.2"/><circle cx="45.5" cy="6.5" r="7" fill="#ececec"/><path d="M42.6 3.6 L48.4 9.4 M48.4 3.6 L42.6 9.4" stroke="#3c444b" stroke-width="1.2"/></svg>
<div class="t " style="left:826.5px;top:207px;font-size:9.3px;letter-spacing:-0.246px;color:#1a1a1a;-webkit-text-stroke:0;">File</div>
<div class="t " style="left:853px;top:207px;font-size:9.3px;letter-spacing:-0.258px;color:#1a1a1a;-webkit-text-stroke:0;">Edit</div>
<div class="t " style="left:881px;top:207px;font-size:9.3px;letter-spacing:-0.246px;color:#1a1a1a;-webkit-text-stroke:0;">View</div>
<div class="t " style="left:913px;top:207px;font-size:9.3px;letter-spacing:-0.167px;color:#1a1a1a;-webkit-text-stroke:0;">Bookmarks</div>
<div class="t " style="left:970px;top:207px;font-size:9.3px;letter-spacing:-0.012px;color:#1a1a1a;-webkit-text-stroke:0;">Settings</div>
<div class="t " style="left:1016.7px;top:207px;font-size:9.3px;letter-spacing:-0.381px;color:#1a1a1a;-webkit-text-stroke:0;">Help</div>
<div class="term">
<div class="tl" style="top:2px">    Info (332111):    1.000       refclk</div>
<div class="tl" style="top:17px">Info (176233): Starting register packing</div>
<div class="tl" style="top:32px">Info (176235): Finished register packing</div>
<div class="tl" style="top:47px">    Extra Info (176219): No registers were packed into other blocks</div>
<div class="tl" style="top:62px">Info (20273): Intermediate fitter snapshots will be committed because ENABLE_INTERMEDIATE_SNAPSHOTS QSF</div>
<div class="tl" style="top:77px"> assignment is enabled during compilation.</div>
<div class="tl" style="top:92px">Info (20274): Successfully committed planned database.</div>
<div class="tl" style="top:107px">Info (21624): Not running Design Assistant in plan stage because there is no enabled rule to check</div>
<div class="tl" style="top:122px">Info (12517): Periphery placement operations ending: elapsed time is 00:01:45</div>
<div class="tl" style="top:137px">Info (11165): Fitter preparation operations ending: elapsed time is 00:00:58</div>
<div class="tl" style="top:152px">Info (22300): Design uses Placement Effort Multiplier = 1.0.</div>
<div class="tl" style="top:167px">Info (14951): The Fitter is using Advanced Physical Optimization.</div>
<div class="tl" style="top:182px">Info (11888): Total time spent on timing analysis during Global Placement is 0.00 seconds.</div>
<div class="tl" style="top:197px">Info (18252): The Fitter is using Physical Synthesis.</div>
<div class="tl" style="top:212px">Info (18258): Fitter Physical Synthesis operations beginning</div>
<div class="tl" style="top:227px">Info (18259): Fitter Physical Synthesis operations ending: elapsed time is 00:00:00</div>
<div class="tl" style="top:242px">Info (11888): Total time spent on timing analysis during Physical Synthesis is 0.00 seconds.</div>
<div class="tl" style="top:257px">Info (11178): Promoted 4 clocks</div>
<div class="tl" style="top:272px">    Info (18386): pll_inst2|iopll_0|stratix10_altera_iopll_i|s10_iopll.fourteennm_pll (4 fanout) drives</div>
<div class="tl" style="top:287px"> clock sectors (1, 0) to (7, 2)</div>
<div class="tl" style="top:302px">    Info (18386): pll_inst2|iopll_0|stratix10_altera_iopll_i|outclk[1] (1 fanout) drives clock sectors </div>
<div class="tl" style="top:317px">(1, 0) to (7, 2)</div>
<div class="tl" style="top:332px">    Info (18386): pll_inst1|iopll_0|stratix10_altera_iopll_i|outclk[1] (1 fanout) drives clock sector (</div>
<div class="tl" style="top:347px">1, 2)</div>
<div class="tl" style="top:362px">    Info (18386): pll_inst1|iopll_0|stratix10_altera_iopll_i|outclk[0] (2 fanout) drives clock sector (</div>
<div class="tl" style="top:377px">1, 0)</div>
<div class="tl" style="top:392px">Info (19438): Detected clock domain crossings between the following signals. To minimize skew, these cl</div>
<div class="tl" style="top:407px">ock trees will be routed to the same region: clock sectors (1, 0) to (7, 2)</div>
<div class="tl" style="top:422px">    Info (19439): Global Signal name: pll_inst2|iopll_0|stratix10_altera_iopll_i|s10_iopll.fourteennm_p</div>
<div class="tl" style="top:437px">ll</div>
<div class="tl" style="top:452px">    Info (19439): Global Signal name: pll_inst2|iopll_0|stratix10_altera_iopll_i|outclk[1]</div>
<div class="tl" style="top:467px">Info (22300): Design uses Placement Effort Multiplier = 1.0.</div>
<div class="tl" style="top:482px">Info (170189): Fitter placement preparation operations beginning</div>
<div class="a" style="left:1px;top:497px;width:8px;height:14px;background:#18b218"></div>
</div>
<div class="a" style="left:1646px;top:223px;width:10px;height:514px;background:linear-gradient(90deg,#fdfcfc,#f1efec 70%,#e9e6e3)"></div>
<div class="a" style="left:1646px;top:232px;width:10px;height:1px;background:#c9c5c1"></div>
<div class="a" style="left:1646px;top:727px;width:10px;height:1px;background:#c9c5c1"></div>
<div class="a" style="left:1646px;top:233px;width:10px;height:473px;background:linear-gradient(90deg,#e6e3e0,#e2dfdc 50%,#dedbd8)"></div>
<div class="a" style="left:1646px;top:705px;width:10px;height:1px;background:#c0bcb8"></div>
<svg class="ic" style="left:1647px;top:225.5px;width:8px;height:4px" ><use href="#sbup"/></svg>
<svg class="ic" style="left:1647px;top:730px;width:8px;height:4px" ><use href="#sbdn"/></svg>
<div class="a" style="left:818px;top:739px;width:280px;height:15px;background:#dedbd7;border:1px solid #bdb9b5;border-top:none;border-radius:0 0 3px 3px"></div>
<div class="a" style="left:1097px;top:737px;width:281px;height:19px;background:#f4f2ef;border:1px solid #bdb9b5;border-top:none;border-radius:0 0 3px 3px"></div>
<div class="t " style="left:931px;top:738.5px;font-size:8.9px;letter-spacing:0.016px;color:#1a1a1a;-webkit-text-stroke:0;">Desktop : arc</div>
<div class="t " style="left:1201px;top:739.5px;font-size:8.9px;letter-spacing:-0.002px;color:#1a1a1a;-webkit-text-stroke:0;">test_restored : arc</div>
<div class="a" style="left:815px;top:757px;width:844px;height:3px;background:linear-gradient(#efebe7,#f1f2f3)"></div>
<div class="a" style="left:1656px;top:207px;width:3px;height:553px;background:linear-gradient(90deg,#efebe7,#f1f2f3)"></div>
</div></body></html>
